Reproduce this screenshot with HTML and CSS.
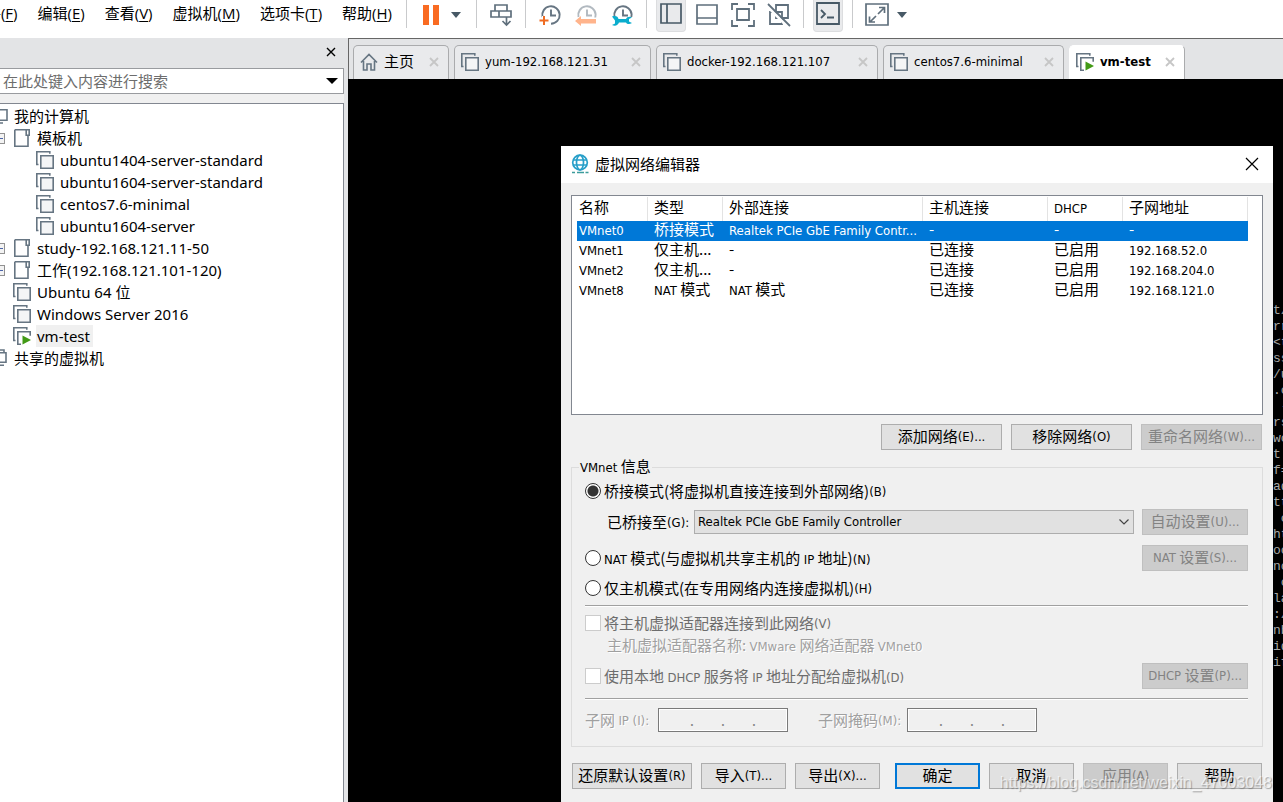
FILE: index.html
```html
<!DOCTYPE html>
<html lang="zh-CN">
<head>
<meta charset="utf-8">
<title>虚拟网络编辑器</title>
<link rel="stylesheet" href="styles.css">
</head>
<body>
<svg class="defs" aria-hidden="true">
  <symbol id="vm" viewBox="0 0 18 18"><path d="M2.5 13.5H.8V.8h13v2" fill="none" stroke="#667582" stroke-width="1.6"/><path d="M4.8 4.8h12.4v12.4H4.8z" fill="#f4f5f6" stroke="#667582" stroke-width="1.6"/></symbol>
  <symbol id="vmrun" viewBox="0 0 18 18"><path d="M2.5 13.5H.8V.8h13v2M8 17.2H4.8V4.8h12.4v4" fill="none" stroke="#667582" stroke-width="1.6"/><path d="M9.500 8.500l8.500 4.500-8.500 4.500z" fill="#429a16"/></symbol>
  <symbol id="folder" viewBox="0 0 18 18"><path d="M1.800 .8h14.400v5.500h-3V.8M15 6.500v10.700H1.800V.8" fill="none" stroke="#667582" stroke-width="1.600"/></symbol>
  <symbol id="pc" viewBox="0 0 18 18"><path d="M1 2.800h16v10.400H1zM5 16h8" fill="none" stroke="#667582" stroke-width="1.600"/></symbol>
  <symbol id="shared" viewBox="0 0 18 18"><path d="M3 3V1h11v2M1 3.800h15v9.400H1zM5 16.200h9" fill="none" stroke="#667582" stroke-width="1.600"/></symbol>
  <symbol id="cross" viewBox="0 0 10 10"><path d="M1 1l8 8M9 1L1 9" fill="none" stroke="currentColor"/></symbol>
  <symbol id="clock" viewBox="0 0 22 22"><path d="M3.500 13a8.700 8.700 0 1 1 8.500 6.700M12 5.500v6h5" fill="none" stroke="#667582" stroke-width="1.900"/></symbol>
</svg>
<header class="topbar">
  <nav class="menu">
    <button>文件(<u>F</u>)</button><button>编辑(<u>E</u>)</button><button>查看(<u>V</u>)</button><button>虚拟机(<u>M</u>)</button><button>选项卡(<u>T</u>)</button><button>帮助(<u>H</u>)</button>
  </nav>
  <div class="toolbar">
    <i class="sep"></i>
    <button class="tool" aria-label="暂停"><svg width="18" height="22"><path d="M1 1h6v20H1zM11 1h6v20h-6z" fill="#f96b22"/></svg></button>
    <button class="caret" aria-label="电源选项"><svg width="10" height="6"><path d="M0 0h10L5 6z" fill="#475966"/></svg></button>
    <i class="sep"></i>
    <button class="tool" aria-label="发送"><svg width="22" height="24" fill="none" stroke="#5f6f7c" stroke-width="1.700"><path d="M5 2h12v6H5zM1 8h8v6H1zM9 8h12v6H9zM16.500 14v8M12.500 18l4 4 4-4"/></svg></button>
    <i class="sep"></i>
    <button class="tool" aria-label="拍摄快照"><svg width="22" height="22"><use href="#clock"/><path d="M5 12v9M.5 16.500h9" stroke="#fff" stroke-width="4"/><path d="M5 12v9M.5 16.500h9" stroke="#ef6c22" stroke-width="2"/></svg></button>
    <button class="tool" aria-label="恢复快照"><svg width="22" height="22"><use href="#clock" opacity=".5"/><path d="M0 13.500h22V22H0z" fill="#fff"/><path d="M0 17L6 12v3h15v4.500H6V22z" fill="#ffb48c"/></svg></button>
    <button class="tool" aria-label="管理快照"><svg width="22" height="22"><use href="#clock"/><path d="M0 13h22v9H0z" fill="#fff"/><path d="M1 12.500c4-1 6 0 6.500 2.500H15c1-2 3-3 6-1.500l-3 1.500v2.500l3 1.500c-3 2-5 1-6-.5H8c-1 3-4 4-7 2.500l3-1.500v-3z" fill="#0badcd"/></svg></button>
    <i class="sep"></i>
    <button class="tool on" aria-label="显示库"><svg width="22" height="22" fill="none" stroke="#475966" stroke-width="1.700"><path d="M1 1h20v19H1zM7 1v19"/></svg></button>
    <button class="tool" aria-label="缩略图栏"><svg width="22" height="22" fill="none" stroke="#5f6f7c" stroke-width="1.700"><path d="M1 1h20v19H1zM1 14h20"/></svg></button>
    <button class="tool" aria-label="全屏"><svg width="24" height="24" fill="none" stroke="#5f6f7c" stroke-width="1.800"><path d="M6 6h12v11H6zM1 7V1h6M17 1h6v6M23 17v6h-6M7 23H1v-6"/></svg></button>
    <button class="tool" aria-label="Unity"><svg width="24" height="24" fill="none" stroke="#5f6f7c" stroke-width="1.800"><path d="M9 2h12v13H9zM3 9h12v12H3z"/><path d="M0 3l21 21" stroke="#fff" stroke-width="3"/><path d="M1 1l22 22"/></svg></button>
    <i class="sep"></i>
    <button class="tool on" aria-label="控制台"><svg width="24" height="24" fill="none" stroke="#475966" stroke-width="1.800"><path d="M1 1h22v21H1zM5 8l4 4-4 4M11 15.500h7"/></svg></button>
    <i class="sep"></i>
    <button class="tool" aria-label="拉伸"><svg width="24" height="24" fill="none" stroke="#5f6f7c" stroke-width="1.700"><path d="M1 1h22v21H1zM13 11l6-6M14 4.500h5.500V10M11 13l-6 6M4.500 13.500V19H10"/></svg></button>
    <button class="caret" aria-label="拉伸选项"><svg width="10" height="6"><path d="M0 0h10L5 6z" fill="#475966"/></svg></button>
  </div>
</header>
<div class="main">
  <aside class="side">
    <div class="sidehead"><button aria-label="关闭库"><svg width="10" height="10"><use href="#cross"/></svg></button></div>
    <div class="search"><input type="text" aria-label="搜索" placeholder="在此处键入内容进行搜索"><svg width="12" height="6"><path d="M0 0h12L6 6z"/></svg></div>
    <div class="treebox">
      <ul class="tree">
        <li class="l0"><svg><use href="#pc"/></svg><span>我的计算机</span></li>
        <li class="l1 exp"><b></b><svg><use href="#folder"/></svg><span>模板机</span></li>
        <li class="l2"><svg><use href="#vm"/></svg><span>ubuntu1404-server-standard</span></li>
        <li class="l2"><svg><use href="#vm"/></svg><span>ubuntu1604-server-standard</span></li>
        <li class="l2"><svg><use href="#vm"/></svg><span>centos7.6-minimal</span></li>
        <li class="l2"><svg><use href="#vm"/></svg><span>ubuntu1604-server</span></li>
        <li class="l1 exp"><b></b><svg><use href="#folder"/></svg><span>study-192.168.121.11-50</span></li>
        <li class="l1 exp"><b></b><svg><use href="#folder"/></svg><span>工作(192.168.121.101-120)</span></li>
        <li class="l1"><svg><use href="#vm"/></svg><span>Ubuntu 64 位</span></li>
        <li class="l1"><svg><use href="#vm"/></svg><span>Windows Server 2016</span></li>
        <li class="l1"><svg><use href="#vmrun"/></svg><span class="sel">vm-test</span></li>
        <li class="l0"><svg><use href="#shared"/></svg><span>共享的虚拟机</span></li>
      </ul>
    </div>
  </aside>
  <main class="work">
    <div class="tabs">
      <div class="tab t1"><svg width="18" height="18" fill="none" stroke="#667582" stroke-width="1.600"><path d="M1 9.500L9 1.500l8 8M3.500 8v9H7v-6h4v6h3.500V8"/></svg><span class="zh">主页</span><button aria-label="关闭"><svg width="10" height="10"><use href="#cross"/></svg></button></div>
      <div class="tab t2"><svg width="18" height="18"><use href="#vm"/></svg><span>yum-192.168.121.31</span><button aria-label="关闭"><svg width="10" height="10"><use href="#cross"/></svg></button></div>
      <div class="tab t3"><svg width="18" height="18"><use href="#vm"/></svg><span>docker-192.168.121.107</span><button aria-label="关闭"><svg width="10" height="10"><use href="#cross"/></svg></button></div>
      <div class="tab t4"><svg width="18" height="18"><use href="#vm"/></svg><span>centos7.6-minimal</span><button aria-label="关闭"><svg width="10" height="10"><use href="#cross"/></svg></button></div>
      <div class="tab t5 active"><svg width="18" height="18"><use href="#vmrun"/></svg><span>vm-test</span><button aria-label="关闭"><svg width="10" height="10"><use href="#cross"/></svg></button></div>
    </div>
    <div class="console">
<pre class="term">t/
rr
&lt;t
ss
/u
.c
 -
rs
wo
t
f=
ad
tt
 c
ht
oo
no
 c
la
:/
nb
id
if</pre>
      <section class="dialog" role="dialog" aria-label="虚拟网络编辑器">
        <div class="title">
          <svg width="18" height="20" fill="none" stroke="#279fc9" stroke-width="1.700"><circle cx="9" cy="8.500" r="7.300"/><ellipse cx="9" cy="8.500" rx="3.500" ry="7.300"/><path d="M2 6h14M2 11h14"/><path d="M1 18.500h3M6 18.500h7M14.500 18.500h3" stroke="#3d9c9c"/></svg>
          <h1>虚拟网络编辑器</h1>
          <button aria-label="关闭"><svg width="14" height="14" fill="none" stroke="#000" stroke-width="1.200"><path d="M1 1l12 12M13 1L1 13"/></svg></button>
        </div>
        <div class="body">
          <div class="list">
            <table>
              <colgroup><col class="c1"><col class="c2"><col class="c3"><col class="c4"><col class="c2"><col class="c4"></colgroup>
              <thead><tr><th>名称</th><th>类型</th><th>外部连接</th><th>主机连接</th><th><span class="en">DHCP</span></th><th>子网地址</th></tr></thead>
              <tbody>
                <tr class="picked"><td><span class="en">VMnet0</span></td><td>桥接模式</td><td><span class="en">Realtek PCIe GbE Family Contr...</span></td><td>-</td><td>-</td><td>-</td></tr>
                <tr><td><span class="en">VMnet1</span></td><td>仅主机...</td><td>-</td><td>已连接</td><td>已启用</td><td><span class="en">192.168.52.0</span></td></tr>
                <tr><td><span class="en">VMnet2</span></td><td>仅主机...</td><td>-</td><td>已连接</td><td>已启用</td><td><span class="en">192.168.204.0</span></td></tr>
                <tr><td><span class="en">VMnet8</span></td><td><span class="en">NAT</span> 模式</td><td><span class="en">NAT</span> 模式</td><td>已连接</td><td>已启用</td><td><span class="en">192.168.121.0</span></td></tr>
              </tbody>
            </table>
          </div>
          <div class="actions">
            <button class="btn">添加网络<span class="en">(E)...</span></button><button class="btn">移除网络<span class="en">(O)</span></button><button class="btn" disabled>重命名网络<span class="en">(W)...</span></button>
          </div>
          <fieldset>
            <legend><span class="en">VMnet</span> 信息</legend>
            <div class="row"><label><input type="radio" name="mode" checked>桥接模式(将虚拟机直接连接到外部网络)<span class="en">(B)</span></label></div>
            <div class="row tall bridge"><label for="nic">已桥接至<span class="en">(G):</span></label><div class="combo"><select id="nic"><option>Realtek PCIe GbE Family Controller</option></select><svg width="10" height="6" fill="none" stroke="#444" stroke-width="1.200"><path d="M.5 .5L5 5 9.500 .5"/></svg></div><button class="btn" disabled>自动设置<span class="en">(U)...</span></button></div>
            <div class="row tall nat"><label><input type="radio" name="mode"><span><span class="en">NAT</span> 模式(与虚拟机共享主机的 <span class="en">IP</span> 地址)<span class="en">(N)</span></span></label><button class="btn" disabled><span class="en">NAT</span> 设置<span class="en">(S)...</span></button></div>
            <div class="row host"><label><input type="radio" name="mode">仅主机模式(在专用网络内连接虚拟机)<span class="en">(H)</span></label></div>
            <hr>
            <div class="row adapter"><label class="off"><input type="checkbox" disabled>将主机虚拟适配器连接到此网络<span class="en">(V)</span></label></div>
            <p class="note">主机虚拟适配器名称: <span class="en">VMware</span> 网络适配器 <span class="en">VMnet0</span></p>
            <div class="row tall dhcp"><label class="off"><input type="checkbox" disabled><span>使用本地 <span class="en">DHCP</span> 服务将 <span class="en">IP</span> 地址分配给虚拟机<span class="en">(D)</span></span></label><button class="btn" disabled><span class="en">DHCP</span> 设置<span class="en">(P)...</span></button></div>
            <hr class="second">
            <div class="row subnet">
              <label for="ip1">子网 <span class="en">IP (I):</span></label>
              <div class="ip"><input id="ip1" disabled>.<input aria-label="IP 2" disabled>.<input aria-label="IP 3" disabled>.<input aria-label="IP 4" disabled></div>
              <label class="mask" for="m1">子网掩码<span class="en">(M):</span></label>
              <div class="ip"><input id="m1" disabled>.<input aria-label="掩码 2" disabled>.<input aria-label="掩码 3" disabled>.<input aria-label="掩码 4" disabled></div>
            </div>
          </fieldset>
          <div class="foot">
            <button class="btn wide">还原默认设置<span class="en">(R)</span></button><button class="btn">导入<span class="en">(T)...</span></button><button class="btn">导出<span class="en">(X)...</span></button><button class="btn ok">确定</button><button class="btn">取消</button><button class="btn" disabled>应用<span class="en">(A)</span></button><button class="btn">帮助</button>
          </div>
        </div>
      </section>
      <div class="watermark">https://blog.csdn.net/weixin_47003048</div>
    </div>
  </main>
</div>
</body>
</html>
```
FILE: styles.css
```css
* { box-sizing: border-box; }
body {
  margin: 0;
  height: 100vh;
  display: flex;
  flex-direction: column;
  overflow: hidden;
  background: #fff;
  color: #000;
  font: 15px/22px "Noto Sans", "Noto Sans CJK SC", sans-serif;
}
button, input, select { font: inherit; color: inherit; }
button { padding: 0; border: 0; background: none; display: flex; align-items: center; justify-content: center; }
svg { display: block; flex: none; }
.defs { position: absolute; width: 0; height: 0; }

.topbar { flex: 0 0 38px; display: flex; align-items: flex-start; overflow: hidden; }
.menu { flex: 0 0 403px; min-width: 0; display: flex; justify-content: flex-end; gap: 20px; padding: 2px 11px 0 0; font: 15px/22px "Open Sans", "Noto Sans CJK SC", sans-serif; white-space: nowrap; }
.menu button { display: block; flex: none; }
.menu u { text-underline-offset: 2px; }
.toolbar { display: flex; align-items: flex-start; gap: 6px; }
.sep { width: 1px; height: 28px; margin: 0 3px; background: #c9cacc; }
.tool { width: 30px; height: 32px; padding-bottom: 3px; }
.tool.on { background: #e9eaec; border: 1px solid #dcdddf; border-top: 0; border-radius: 0 0 4px 4px; }
.caret { width: 19px; height: 30px; margin-left: -4px; padding-left: 3px; justify-content: flex-start; }

.main { flex: 1; min-height: 0; display: flex; }
.side { flex: 0 0 348px; display: flex; flex-direction: column; padding-right: 4px; background: #e3e4e6; }
.sidehead { height: 30px; display: flex; justify-content: flex-end; padding: 0 8px 2px 0; stroke-width: 1.4px; }
.search { height: 26px; display: flex; align-items: center; padding: 0 5px 0 3px; background: #fff; border: 1px solid #999b9f; border-left: 0; }
.search input { flex: 1; min-width: 0; padding: 0; border: 0; outline: 0; background: none; }
.search input::placeholder { color: #6d6d6d; opacity: 1; }
.treebox { flex: 1; margin-top: 9px; overflow: hidden; background: #fff; border: 1px solid #828790; border-width: 1px 1px 0 0; box-shadow: 0 -9px #f0f0f0; }
.tree { list-style: none; margin: 1px 0 0 -10px; padding: 0; }
.tree li { display: flex; align-items: center; gap: 5px; height: 22px; white-space: nowrap; }
.tree li > svg { width: 18px; height: 18px; }
.tree span { padding: 0 1px; }
.l1 { padding-left: 23px; }
.l2 { padding-left: 46px; }
.tree .exp { padding-left: 6px; }
.exp b { width: 9px; height: 11px; margin-right: 3px; border: 1px solid #919191; background: linear-gradient(#4b63a7, #4b63a7) center / 5px 1px no-repeat #f3f3f3; }
.tree .sel { background: #f0f0f0; padding-right: 3px; }

.work { flex: 1; min-width: 0; display: flex; flex-direction: column; }
.tabs { height: 41px; display: flex; align-items: flex-end; gap: 5px; padding-left: 4px; background: #e3e4e6; border: 1px solid #666; border-width: 1px 0 0 1px; font-family: "DejaVu Sans Condensed", "Noto Sans CJK SC", sans-serif; font-size: 13px; }
.tab { height: 34px; display: flex; align-items: center; padding: 0 9px 1px 6px; background: #e9eaec; border: 1px solid #aaabad; border-bottom: 0; border-radius: 5px 5px 0 0; white-space: nowrap; }
.tab span { margin-left: 6px; }
.tab .zh { font-size: 15px; }
.tab button { margin-left: auto; color: #c6c6c6; stroke-width: 1.8px; }
.t1 { width: 96px; }
.t2 { width: 197px; }
.t3 { width: 222px; }
.t4 { width: 181px; }
.t5 { width: 116px; }
.tab.active { background: #fff; border-left-color: #fff; border-top-color: #fff; font-weight: bold; }

.console { position: relative; flex: 1; min-height: 0; overflow: hidden; background: #000; }
.term { width: 10px; margin: 224px 0 0 auto; overflow: hidden; color: #a8a8a8; font: 13px/16px "Liberation Mono", monospace; }

.dialog { position: absolute; top: 67px; left: 213px; right: 10px; height: 680px; background: #f0f0f0; font-family: "Noto Sans CJK SC", sans-serif; font-size: 15px; line-height: 20px; white-space: nowrap; }
.en { font-family: "DejaVu Sans Condensed", "Noto Sans", sans-serif; font-size: 13px; line-height: 1; }
.title { height: 37px; display: flex; align-items: center; gap: 6px; padding: 0 14px 2px 10px; background: #fff; }
.title h1 { margin: 0; font: 15px/22px "Noto Sans CJK SC", sans-serif; }
.title button { margin-left: auto; }
.body { padding: 12px 10px 0; }
.list { height: 220px; padding: 1px 0 0 5px; background: #fff; border: 1px solid #828790; }
table { table-layout: fixed; width: 671px; border-collapse: separate; border-spacing: 0; }
.c1 { width: 71px; }
.c2 { width: 75px; }
.c3 { width: 200px; }
.c4 { width: 125px; }
th, td { padding: 0 0 4px 6px; text-align: left; font-weight: normal; height: 20px; line-height: 16px; }
th:first-child, td:first-child { padding-left: 2px; }
th { height: 24px; border-right: 1px solid #e3e3e3; }
.picked { background: #0078d7; color: #fff; }

.btn { height: 26px; padding-bottom: 2px; background: #e1e1e1; border: 1px solid #adadad; white-space: pre; }
.btn:disabled { background: #ccc; border-color: #bfbfbf; color: #838383; }
.actions { display: flex; justify-content: flex-end; gap: 9px; padding: 9px 1px 8px 0; }
.actions .btn { width: 121px; }

fieldset { margin: 0; padding: 4px 14px 14px 13px; border: 1px solid #dcdcdc; min-width: 0; }
legend { height: 18px; margin-left: -6px; padding: 0 1px; line-height: 16px; }
.row { display: flex; align-items: center; height: 22px; }
.row label { display: flex; align-items: center; white-space: pre; }
.tall { height: 26px; }
.tall .btn { width: 106px; margin-left: auto; }
input[type="radio"], input[type="checkbox"] { appearance: none; width: 16px; height: 16px; margin: 0 3px 0 0; background: #fff; border: 1px solid #333; }
input[type="radio"] { border-radius: 50%; }
input[type="radio"]:checked { background: radial-gradient(circle, #333 0 5px, #fff 6px); }
input[type="checkbox"] { border-color: #ccc; }
.off { color: #6d6d6d; }
.bridge { margin-top: 7px; padding-left: 22px; }
.bridge label { width: 87px; }
.combo { position: relative; flex: 1; margin-right: 8px; }
.combo select { appearance: none; display: block; width: 100%; height: 24px; padding: 0 3px; border: 1px solid #adadad; border-radius: 0; background: #e1e1e1; font: 13px/20px "DejaVu Sans Condensed", "Noto Sans", sans-serif; }
.combo svg { position: absolute; right: 5px; top: 9px; pointer-events: none; }
.nat { margin-top: 10px; }
.host { margin-top: 6px; }
hr { height: 2px; margin: 6px 0 5px; border: 0; border-top: 1px solid #a0a0a0; background: #fff; }
.note { margin: 1px 0 8px 22px; color: #a0a0a0; text-shadow: 1px 1px #fff; }
.second { margin: 9px 0 8px; }
.subnet { height: 24px; color: #a0a0a0; }
.subnet label { width: 73px; text-shadow: 1px 1px #fff; }
.subnet .mask { width: 89px; margin-left: 30px; }
.ip { display: flex; align-items: center; width: 130px; height: 24px; padding: 0 4px; border: 1px solid #7a7a7a; box-shadow: inset 0 0 0 1px #fff; color: #838383; font-size: 14px; }
.ip input { flex: 1; min-width: 0; height: 18px; padding: 0; border: 0; background: none; }

.foot { display: flex; gap: 9px; padding: 16px 1px 0; }
.foot .btn { flex: 1 1 85px; }
.foot .wide { flex-basis: 120px; }
.foot .ok { margin-left: 6px; border: 2px solid #0078d7; }

.watermark { position: absolute; right: 11px; bottom: 7px; color: rgba(255, 255, 255, .65); font: 16px/24px "Liberation Sans", sans-serif; text-shadow: 1px 1px 1px rgba(110, 110, 110, .6); }
```
